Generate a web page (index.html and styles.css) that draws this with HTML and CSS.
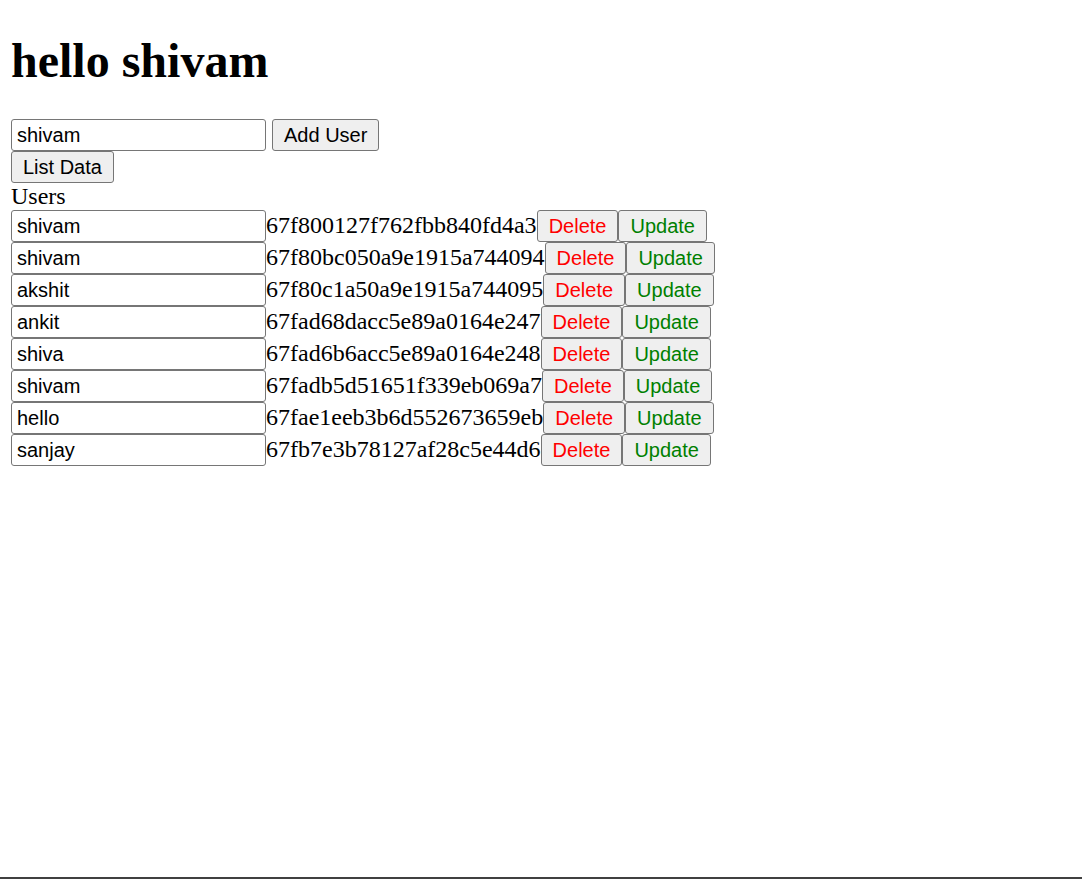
FILE: index.html
```html
<!DOCTYPE html>
<html>
<head>
<meta charset="utf-8">
<title>Users</title>
<link rel="stylesheet" href="styles.css">
</head>
<body>
<h1 class="title">hello shivam</h1>
<div class="add-row">
  <input class="field" type="text" value="shivam"><button class="btn">Add User</button>
</div>
<div class="list-row"><button class="btn">List Data</button></div>
<div class="label">Users</div>
<div class="users">
  <div class="user"><input class="field" type="text" value="shivam"><span class="uid">67f800127f762fbb840fd4a3</span><button class="btn del">Delete</button><button class="btn upd">Update</button></div>
  <div class="user"><input class="field" type="text" value="shivam"><span class="uid">67f80bc050a9e1915a744094</span><button class="btn del">Delete</button><button class="btn upd">Update</button></div>
  <div class="user"><input class="field" type="text" value="akshit"><span class="uid">67f80c1a50a9e1915a744095</span><button class="btn del">Delete</button><button class="btn upd">Update</button></div>
  <div class="user"><input class="field" type="text" value="ankit"><span class="uid">67fad68dacc5e89a0164e247</span><button class="btn del">Delete</button><button class="btn upd">Update</button></div>
  <div class="user"><input class="field" type="text" value="shiva"><span class="uid">67fad6b6acc5e89a0164e248</span><button class="btn del">Delete</button><button class="btn upd">Update</button></div>
  <div class="user"><input class="field" type="text" value="shivam"><span class="uid">67fadb5d51651f339eb069a7</span><button class="btn del">Delete</button><button class="btn upd">Update</button></div>
  <div class="user"><input class="field" type="text" value="hello"><span class="uid">67fae1eeb3b6d552673659eb</span><button class="btn del">Delete</button><button class="btn upd">Update</button></div>
  <div class="user"><input class="field" type="text" value="sanjay"><span class="uid">67fb7e3b78127af28c5e44d6</span><button class="btn del">Delete</button><button class="btn upd">Update</button></div>
</div>
<div class="edge"></div>
</body>
</html>
```

FILE: styles.css
```css
html, body {
  background: #ffffff;
}
body {
  margin: 0;
  padding: 0 11px;
  font-family: "Liberation Serif", "Times New Roman", serif;
  font-size: 24px;
  color: #000000;
}
.title {
  font-size: 48px;
  font-weight: bold;
  margin: 0;
  padding: 33px 0 31px 0;
  line-height: normal;
}
.add-row {
  display: flex;
  align-items: baseline;
  gap: 6px;
}
.list-row {
  display: flex;
}
.label {
  line-height: normal;
}
.users {
  display: flex;
  flex-direction: column;
}
.user {
  display: flex;
  align-items: baseline;
}
.field {
  box-sizing: border-box;
  width: 255px;
  height: 32px;
  margin: 0;
  padding: 0 4px 0 5px;
  border: 1px solid #767676;
  border-radius: 3px;
  font-family: "Liberation Sans", Arial, sans-serif;
  font-size: 20px;
  line-height: normal;
  color: #000000;
  background: #ffffff;
}
.uid {
  line-height: normal;
  white-space: nowrap;
}
.btn {
  box-sizing: border-box;
  height: 32px;
  margin: 0;
  padding: 0 11px;
  border: 1px solid #767676;
  border-radius: 3px;
  background: #efefef;
  font-family: "Liberation Sans", Arial, sans-serif;
  font-size: 20px;
  line-height: normal;
  color: #000000;
}
.user .del {
  color: #ff0000;
}
.user .upd {
  color: #008000;
}
.edge {
  position: fixed;
  left: 0;
  right: 0;
  bottom: 0;
  height: 2px;
  background: #404040;
}
```
